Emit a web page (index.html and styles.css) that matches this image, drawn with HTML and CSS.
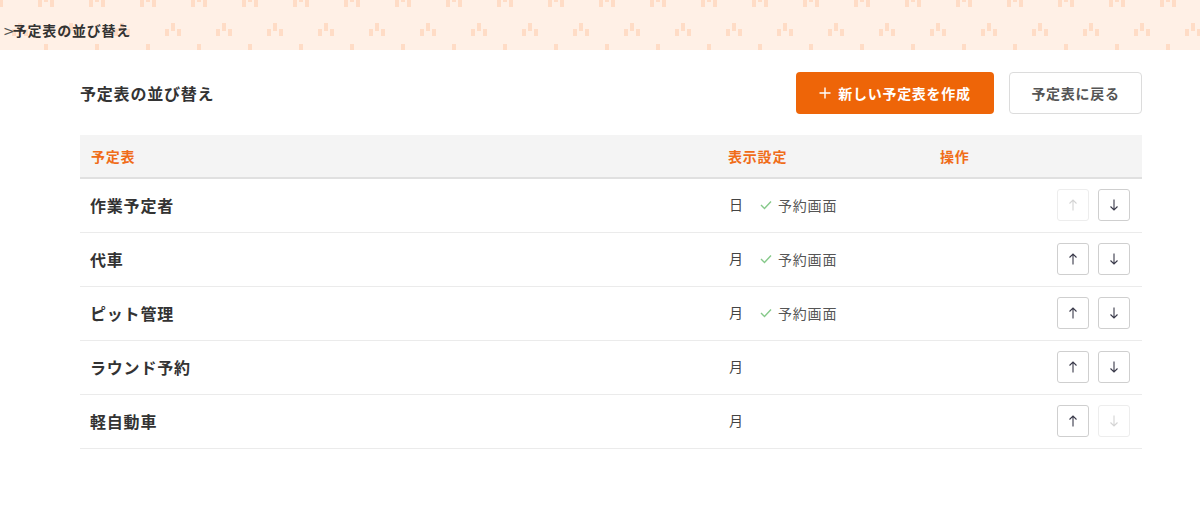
FILE: index.html
```html
<!DOCTYPE html>
<html lang="ja">
<head>
<meta charset="utf-8">
<title>予定表の並び替え</title>
<link rel="stylesheet" href="styles.css">
</head>
<body>
<header class="crumb-bar">
  <span class="crumb-sep">&gt;</span><span class="crumb-text">予定表の並び替え</span>
</header>
<main class="content">
  <div class="toolbar">
    <h1 class="page-title">予定表の並び替え</h1>
    <div class="actions">
      <button class="btn btn-primary"><svg class="plus" viewBox="0 0 12 12"><path d="M6 0.5V11.5M0.5 6H11.5"/></svg>新しい予定表を作成</button>
      <button class="btn btn-secondary">予定表に戻る</button>
    </div>
  </div>
  <table class="sched-table">
    <thead>
      <tr>
        <th class="c-name">予定表</th>
        <th class="c-disp">表示設定</th>
        <th class="c-ops">操作</th>
      </tr>
    </thead>
    <tbody>
      <tr>
        <td class="c-name">作業予定者</td>
        <td class="c-disp"><span class="unit">日</span><span class="flag"><svg class="check" viewBox="0 0 12 10"><polyline points="1,5 4.5,8.5 11,1.5"/></svg>予約画面</span></td>
        <td class="c-ops"><div class="ops"><button class="arrow" disabled><svg class="ico" viewBox="0 0 10 12"><path d="M5 11.5V1M1.5 4.5L5 1L8.5 4.5"/></svg></button><button class="arrow"><svg class="ico" viewBox="0 0 10 12"><path d="M5 0.5V11M1.5 7.5L5 11L8.5 7.5"/></svg></button></div></td>
      </tr>
      <tr>
        <td class="c-name">代車</td>
        <td class="c-disp"><span class="unit">月</span><span class="flag"><svg class="check" viewBox="0 0 12 10"><polyline points="1,5 4.5,8.5 11,1.5"/></svg>予約画面</span></td>
        <td class="c-ops"><div class="ops"><button class="arrow"><svg class="ico" viewBox="0 0 10 12"><path d="M5 11.5V1M1.5 4.5L5 1L8.5 4.5"/></svg></button><button class="arrow"><svg class="ico" viewBox="0 0 10 12"><path d="M5 0.5V11M1.5 7.5L5 11L8.5 7.5"/></svg></button></div></td>
      </tr>
      <tr>
        <td class="c-name">ピット管理</td>
        <td class="c-disp"><span class="unit">月</span><span class="flag"><svg class="check" viewBox="0 0 12 10"><polyline points="1,5 4.5,8.5 11,1.5"/></svg>予約画面</span></td>
        <td class="c-ops"><div class="ops"><button class="arrow"><svg class="ico" viewBox="0 0 10 12"><path d="M5 11.5V1M1.5 4.5L5 1L8.5 4.5"/></svg></button><button class="arrow"><svg class="ico" viewBox="0 0 10 12"><path d="M5 0.5V11M1.5 7.5L5 11L8.5 7.5"/></svg></button></div></td>
      </tr>
      <tr>
        <td class="c-name">ラウンド予約</td>
        <td class="c-disp"><span class="unit">月</span></td>
        <td class="c-ops"><div class="ops"><button class="arrow"><svg class="ico" viewBox="0 0 10 12"><path d="M5 11.5V1M1.5 4.5L5 1L8.5 4.5"/></svg></button><button class="arrow"><svg class="ico" viewBox="0 0 10 12"><path d="M5 0.5V11M1.5 7.5L5 11L8.5 7.5"/></svg></button></div></td>
      </tr>
      <tr>
        <td class="c-name">軽自動車</td>
        <td class="c-disp"><span class="unit">月</span></td>
        <td class="c-ops"><div class="ops"><button class="arrow"><svg class="ico" viewBox="0 0 10 12"><path d="M5 11.5V1M1.5 4.5L5 1L8.5 4.5"/></svg></button><button class="arrow" disabled><svg class="ico" viewBox="0 0 10 12"><path d="M5 0.5V11M1.5 7.5L5 11L8.5 7.5"/></svg></button></div></td>
      </tr>
    </tbody>
  </table>
</main>
</body>
</html>
```

FILE: styles.css
```css
* { box-sizing: border-box; }
html, body { margin: 0; padding: 0; background: #fff; }
body {
  font-family: "Noto Sans CJK JP", "Noto Sans", sans-serif;
  color: #333;
  letter-spacing: 0.05em;
}
.crumb-bar {
  height: 50px;
  padding: 20px 0 0 3px;
  background-color: #fff0e6;
  background-image: url("data:image/svg+xml,%3Csvg xmlns='http://www.w3.org/2000/svg' width='51' height='50'%3E%3Cg fill='%23ffdcc6'%3E%3Crect x='44' y='-6' width='4' height='8'/%3E%3Crect x='44' y='44' width='4' height='8'/%3E%3Crect x='38' y='0' width='4' height='7'/%3E%3Crect x='50' y='0' width='4' height='7'/%3E%3Crect x='-1' y='0' width='4' height='7'/%3E%3Crect x='18' y='23' width='4' height='8'/%3E%3Crect x='12' y='29' width='4' height='7'/%3E%3Crect x='24' y='29' width='4' height='7'/%3E%3C/g%3E%3C/svg%3E");
  background-position: 0 0;
  font-size: 14px;
  line-height: 20px;
  white-space: nowrap;
}
.crumb-sep {
  color: #555;
  font-family: "DejaVu Sans", sans-serif;
  font-size: 14px;
  font-weight: 400;
  letter-spacing: 0;
  margin-right: -2px;
}
.crumb-text { font-weight: 700; color: #333; }
.content { padding: 22px 58px 0 80px; }
.toolbar {
  display: flex;
  align-items: center;
  justify-content: space-between;
  height: 42px;
}
.page-title { margin: 0; font-size: 16px; font-weight: 700; color: #333; }
.actions { display: flex; gap: 15px; }
.btn {
  height: 42px;
  border-radius: 4px;
  font-family: inherit;
  font-size: 14px;
  font-weight: 700;
  letter-spacing: 0.05em;
  cursor: pointer;
  display: inline-flex;
  align-items: center;
  justify-content: center;
}
.btn-primary {
  width: 198px;
  background: #ee6508;
  border: none;
  color: #fff;
}
.plus {
  width: 12px;
  height: 12px;
  margin-right: 7px;
  fill: none;
  stroke: #fff;
  stroke-width: 1.4;
}
.btn-secondary {
  width: 133px;
  background: #fff;
  border: 1px solid #dcdcdc;
  color: #555;
}
.sched-table {
  width: 100%;
  margin-top: 21px;
  border-collapse: collapse;
}
.sched-table th {
  height: 43px;
  background: #f4f4f4;
  border-bottom: 2px solid #e0e0e0;
  color: #f06c18;
  font-size: 14px;
  font-weight: 700;
  text-align: left;
  padding: 0 0 0 11px;
}
.sched-table td {
  height: 54px;
  border-bottom: 1px solid #ebebeb;
  padding: 0 0 0 10px;
}
.sched-table th.c-name { width: 637px; }
.sched-table th.c-disp { width: 212px; }
td.c-name { font-size: 16px; font-weight: 700; color: #333; }
td.c-disp { font-size: 14px; color: #444; padding-left: 12px; padding-bottom: 2px; }
.unit { display: inline-block; width: 31px; }
.flag { display: inline-flex; align-items: center; color: #555; }
.check {
  width: 12px;
  height: 10px;
  margin-right: 6px;
  fill: none;
  stroke: #86c98a;
  stroke-width: 1.4;
}
td.c-ops { padding-right: 12px; }
.ops { display: flex; justify-content: flex-end; gap: 9px; }
.arrow {
  width: 32px;
  height: 32px;
  padding: 0;
  background: #fff;
  border: 1px solid #cfcfcf;
  border-radius: 3px;
  display: inline-flex;
  align-items: center;
  justify-content: center;
  color: #3a3a4a;
}
.ico {
  width: 10px;
  height: 12px;
  fill: none;
  stroke: currentColor;
  stroke-width: 1.1;
}
.arrow:disabled { border-color: #ededed; color: #d4d4d4; }
```
